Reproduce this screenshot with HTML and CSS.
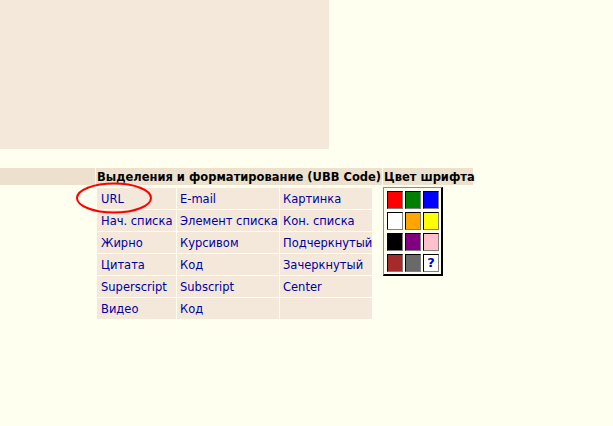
FILE: index.html
```html
<!doctype html>
<html lang="ru">
  <head>
    <meta charset="UTF-8" />
    <title>UBB Code</title>
    <link rel="stylesheet" href="styles.css">
  </head>
  <body>
    <div class="preview-box"></div>

    <div class="ubb-head">
      <div class="ubb-head-pad"></div>
      <div class="ubb-head-main">Выделения и форматирование (UBB Code)</div>
      <div class="ubb-head-color">Цвет шрифта</div>
    </div>

    <div class="ubb-body">
      <div class="ubb-codes">
        <a class="ubb-cell" href="#">URL</a>
        <a class="ubb-cell" href="#">E-mail</a>
        <a class="ubb-cell" href="#">Картинка</a>
        <a class="ubb-cell" href="#">Нач. списка</a>
        <a class="ubb-cell" href="#">Элемент списка</a>
        <a class="ubb-cell" href="#">Кон. списка</a>
        <a class="ubb-cell" href="#">Жирно</a>
        <a class="ubb-cell" href="#">Курсивом</a>
        <a class="ubb-cell" href="#">Подчеркнутый</a>
        <a class="ubb-cell" href="#">Цитата</a>
        <a class="ubb-cell" href="#">Код</a>
        <a class="ubb-cell" href="#">Зачеркнутый</a>
        <a class="ubb-cell" href="#">Superscript</a>
        <a class="ubb-cell" href="#">Subscript</a>
        <a class="ubb-cell" href="#">Center</a>
        <a class="ubb-cell" href="#">Видео</a>
        <a class="ubb-cell" href="#">Код</a>
        <span class="ubb-cell"></span>
      </div>

      <div class="color-box">
        <span class="swatch" style="background: #ff0000"></span>
        <span class="swatch" style="background: #008000"></span>
        <span class="swatch" style="background: #0000ff"></span>
        <span class="swatch" style="background: #ffffff"></span>
        <span class="swatch" style="background: #ffa500"></span>
        <span class="swatch" style="background: #ffff00"></span>
        <span class="swatch" style="background: #000000"></span>
        <span class="swatch" style="background: #800080"></span>
        <span class="swatch" style="background: #ffc0cb"></span>
        <span class="swatch" style="background: #a52a2a"></span>
        <span class="swatch" style="background: #696969"></span>
        <span class="swatch swatch-other">?</span>
      </div>
    </div>

    <!-- пометка вокруг ссылки URL -->
    <svg class="mark" width="80" height="34" viewBox="0 0 80 34">
      <ellipse cx="40" cy="17" rx="37" ry="14.5" fill="none" stroke="#ff0000" stroke-width="2" />
    </svg>
  </body>
</html>
```

FILE: styles.css
```css
body {
  margin: 0;
  padding: 0;
  background: #fffff0;
  font-family: Tahoma, "DejaVu Sans", sans-serif;
  font-size: 11.5px;
  position: relative;
  min-height: 426px;
}

.preview-box {
  width: 329px;
  height: 149px;
  background: #f3e8d9;
}

/* заголовок таблицы */
.ubb-head {
  display: flex;
  gap: 1px;
  margin-top: 19px;
  height: 17px;
}

.ubb-head > div {
  background: #ede0cc;
}

.ubb-head-pad {
  width: 95px;
}

.ubb-head-main,
.ubb-head-color {
  font-family: "DejaVu Sans", sans-serif;
  font-weight: bold;
  font-size: 11.5px;
  line-height: 17px;
  padding-top: 1px;
  height: 16px;
  color: #000;
  padding-left: 1px;
  white-space: nowrap;
}

.ubb-head-main {
  width: 285px;
}

.ubb-head-color {
  width: 89px;
}

.ubb-body {
  display: flex;
  align-items: flex-start;
  padding-left: 97px;
  margin-top: 2px;
}

.ubb-codes {
  display: grid;
  grid-template-columns: 79px 102px 92px;
  grid-auto-rows: 21px;
  gap: 1px;
  margin-top: 1px;
}

.ubb-cell {
  background: #f3e8d9;
  color: #0000a0;
  text-decoration: none;
  padding-left: 3px;
  padding-top: 1px;
  line-height: 21px;
  white-space: nowrap;
  overflow: hidden;
}

.ubb-cell:nth-child(3n+1) {
  padding-left: 4px;
}

/* палитра цветов */
.color-box {
  margin-left: 11px;
  display: grid;
  grid-template-columns: repeat(3, 16px);
  grid-auto-rows: 18px;
  column-gap: 2px;
  row-gap: 3px;
  padding: 3px 2px 2px 3px;
  border: 1px solid;
  border-color: #8c8c8c #000 #000 #8c8c8c;
  border-width: 1px 2px 2px 1px;
}

.swatch {
  display: block;
  box-sizing: border-box;
  border: 1px solid;
  border-color: #000 #808080 #808080 #000;
}

.swatch-other {
  background: #fff;
  color: #0000c0;
  font-weight: bold;
  font-size: 13px;
  line-height: 16px;
  text-align: center;
}

.mark {
  position: absolute;
  left: 74px;
  top: 181px;
}
```
